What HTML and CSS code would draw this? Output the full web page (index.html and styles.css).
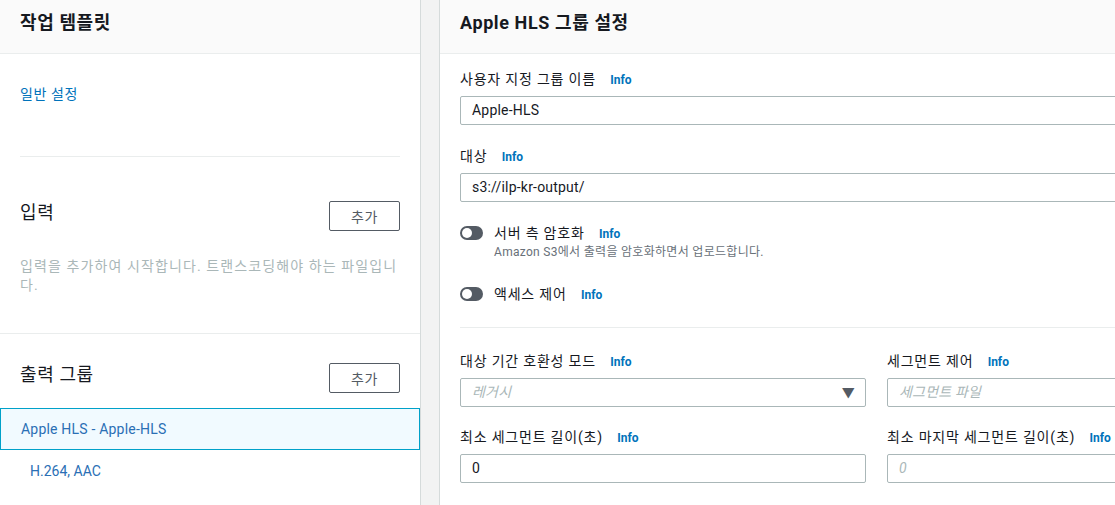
FILE: index.html
```html
<!DOCTYPE html>
<html lang="ko">
<head>
<meta charset="UTF-8" />
<meta name="viewport" content="width=device-width, initial-scale=1.0">
<title>작업 템플릿</title>
<link rel="stylesheet" href="styles.css">
</head>
<body>
<div class="page">
  <aside class="sidebar">
    <div class="panel-head">작업 템플릿</div>

    <div class="side-general">
      <a href="#" class="link">일반 설정</a>
    </div>

    <div class="side-section inputs">
      <div class="side-row">
        <div class="side-title">입력</div>
        <button class="btn">추가</button>
      </div>
      <p class="side-desc">입력을 추가하여 시작합니다. 트랜스코딩해야 하는 파일입니다.</p>
    </div>

    <div class="side-section outputs">
      <div class="side-row">
        <div class="side-title">출력 그룹</div>
        <button class="btn">추가</button>
      </div>
    </div>
    <div class="group-item selected">Apple HLS - Apple-HLS</div>
    <div class="group-sub">H.264, AAC</div>
  </aside>

  <div class="gutter"></div>

  <main class="main">
    <div class="panel-head">Apple HLS 그룹 설정</div>

    <div class="form">
      <div class="field">
        <label class="label">사용자 지정 그룹 이름 <a href="#" class="info">Info</a></label>
        <div class="input">Apple-HLS</div>
      </div>

      <div class="field dest">
        <label class="label">대상 <a href="#" class="info">Info</a></label>
        <div class="input">s3://ilp-kr-output/</div>
      </div>

      <div class="toggle-row first">
        <span class="toggle"></span>
        <div>
          <div class="label">서버 측 암호화 <a href="#" class="info">Info</a></div>
          <div class="hint">Amazon S3에서 출력을 암호화하면서 업로드합니다.</div>
        </div>
      </div>

      <div class="toggle-row second">
        <span class="toggle"></span>
        <div class="label">액세스 제어 <a href="#" class="info">Info</a></div>
      </div>

      <hr class="divider">

      <div class="grid">
        <div class="field">
          <label class="label">대상 기간 호환성 모드 <a href="#" class="info">Info</a></label>
          <div class="input select placeholder">레거시<span class="caret">▼</span></div>
        </div>
        <div class="field">
          <label class="label">세그먼트 제어 <a href="#" class="info">Info</a></label>
          <div class="input placeholder">세그먼트 파일</div>
        </div>
        <div class="field">
          <label class="label">최소 세그먼트 길이(초) <a href="#" class="info">Info</a></label>
          <div class="input">0</div>
        </div>
        <div class="field">
          <label class="label">최소 마지막 세그먼트 길이(초) <a href="#" class="info">Info</a></label>
          <div class="input placeholder">0</div>
        </div>
      </div>
    </div>
  </main>
</div>
</body>
</html>
```

FILE: styles.css
```css
html, body {
  margin: 0;
  height: 100%;
  overflow: hidden;
}
body {
  font-family: Roboto, "Noto Sans CJK KR", sans-serif;
  font-size: 14px;
  letter-spacing: 0.6px;
  color: #16191f;
  background-color: #f2f3f3;
}
.page {
  display: flex;
  min-height: 100vh;
  width: 1320px;
}
.sidebar {
  width: 420px;
  flex: none;
  background-color: white;
  border-right: 1px solid #d5dbdb;
}
.gutter {
  width: 18px;
  flex: none;
}
.main {
  width: 874px;
  flex: none;
  background-color: white;
  border-left: 1px solid #d5dbdb;
}
.panel-head {
  box-sizing: border-box;
  height: 54px;
  padding: 12px 20px 0;
  background-color: #fafafa;
  border-bottom: 1px solid #eaeded;
  font-size: 18px;
  font-weight: bold;
  line-height: 22px;
}
.link {
  color: #0073bb;
  text-decoration: none;
}
.side-general {
  margin: 0 20px;
  padding: 30px 0 52px;
  line-height: 20px;
  border-bottom: 1px solid #eaeded;
}
.side-section {
  padding: 0 20px;
}
.inputs {
  padding-top: 44px;
  height: 132px;
  border-bottom: 1px solid #eaeded;
}
.outputs {
  padding-top: 29px;
  height: 45px;
}
.side-row {
  display: flex;
  justify-content: space-between;
  align-items: center;
}
.side-title {
  font-size: 18px;
  line-height: 24px;
  margin-top: -6px;
}
.btn {
  width: 71px;
  height: 30px;
  background: white;
  border: 1px solid #545b64;
  border-radius: 2px;
  color: #545b64;
  font-family: inherit;
  font-size: 14px;
  letter-spacing: 0.6px;
  padding: 0;
}
.side-desc {
  margin: 26px 0 0;
  color: #aab7b8;
  line-height: 19px;
  letter-spacing: 1.1px;
}
.group-item {
  box-sizing: border-box;
  height: 42px;
  padding: 0 20px;
  line-height: 40px;
  color: #2a6fb5;
  letter-spacing: 0.2px;
}
.selected {
  background-color: #f1faff;
  border: 1px solid #00a1c9;
}
.group-sub {
  padding: 11px 30px 0;
  line-height: 20px;
  color: #2a6fb5;
  letter-spacing: 0;
}
.form {
  padding: 15px 20px 0;
  width: 833px;
}
.label {
  display: block;
  line-height: 20px;
  letter-spacing: 0.8px;
}
.info {
  margin-left: 10px;
  color: #0073bb;
  font-size: 12px;
  font-weight: bold;
  letter-spacing: 0;
  text-decoration: none;
}
.input {
  box-sizing: border-box;
  height: 29px;
  margin-top: 6px;
  padding: 0 11px;
  border: 1px solid #aab7b8;
  border-radius: 2px;
  line-height: 27px;
  letter-spacing: 0.2px;
}
.dest {
  margin-top: 21px;
}
.placeholder {
  color: #aab7b8;
  font-style: italic;
}
.select {
  display: flex;
  justify-content: space-between;
}
.caret {
  font-style: normal;
  color: #545b64;
  font-size: 13px;
  margin-right: -1px;
}
.toggle-row {
  display: flex;
  align-items: flex-start;
  gap: 11px;
}
.toggle-row.first {
  margin-top: 21px;
}
.toggle-row.second {
  margin-top: 24px;
}
.toggle {
  position: relative;
  flex: none;
  width: 23px;
  height: 14px;
  margin-top: 3px;
  border-radius: 7px;
  background-color: #545b64;
}
.toggle::after {
  content: "";
  position: absolute;
  left: 2px;
  top: 2px;
  width: 10px;
  height: 10px;
  border-radius: 50%;
  background-color: white;
}
.hint {
  font-size: 12px;
  line-height: 16px;
  color: #687078;
  letter-spacing: 0.3px;
}
.divider {
  margin: 22px 0 0;
  border: 0;
  border-top: 1px solid #eaeded;
}
.grid {
  display: grid;
  grid-template-columns: 406px 406px;
  column-gap: 21px;
  row-gap: 20px;
  padding-top: 23px;
}
```
